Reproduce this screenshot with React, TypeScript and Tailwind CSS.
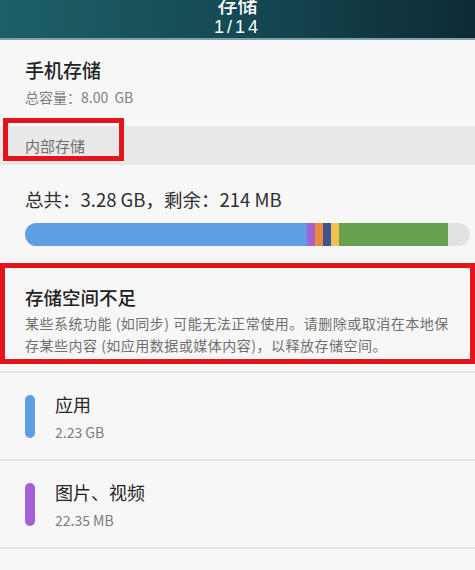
import React from "react";

const font = { fontFamily: '"Noto Sans CJK SC", "Noto Sans", "Liberation Sans", sans-serif' };

function Row({ color, title, size }: { color: string; title: string; size: string }) {
  return (
    <div className="flex h-[88px] border-b-2 border-[#e6e6e6] pl-[25px] pt-[19px]">
      <div className={`mt-[3px] h-[43px] w-[10px] rounded-full ${color}`} />
      <div className="ml-[20px] flex flex-col">
        <div className="text-[18px] leading-[24px] text-[#262626]">{title}</div>
        <div className="mt-[7px] text-[14px] leading-[18px] text-[#7b7b7b]">{size}</div>
      </div>
    </div>
  );
}

export default function App() {
  return (
    <div className="relative h-[570px] w-[475px] overflow-hidden bg-[#f7f7f7]" style={font}>
      {/* Header */}
      <div className="h-[40px] overflow-hidden border-b-[2px] border-[#7fa2a6] bg-gradient-to-r from-[#1d5f66] via-[#154a54] to-[#0d2a36]">
        <div className="-mt-[8px] flex flex-col items-center text-white">
          <div className="text-[20px] leading-[26px] font-medium">存储</div>
          <div className="-mt-[1px] text-[18px] leading-[20px] font-light tracking-[3px]" style={{ fontFamily: '"Liberation Sans", sans-serif' }}>
            1/14
          </div>
        </div>
      </div>

      {/* Phone storage */}
      <div className="px-[25px] pt-[16px] pb-[4px]">
        <div className="text-[19px] leading-[28px] font-medium text-[#222]">手机存储</div>
        <div className="mt-[3px] whitespace-pre text-[14px] leading-[20px] text-[#808080]">总容量：8.00  GB</div>
      </div>

      {/* Section header */}
      <div className="mt-[15px] h-[39px] bg-[#e9e9e9] pl-[25px] pt-[10px] text-[15px] leading-[20px] text-[#6e6e6e]">内部存储</div>

      {/* Totals */}
      <div className="px-[25px] pt-[21px]">
        <div className="text-[18.5px] leading-[26px] text-[#2e2e2e]">总共：3.28 GB，剩余：214 MB</div>
        <div className="mt-[11px] flex h-[23px] w-[445px] overflow-hidden rounded-full bg-[#e2e2e2]">
          <div className="w-[282px] bg-[#5e9fe4]" />
          <div className="w-[8px] bg-[#a163d4]" />
          <div className="w-[8px] bg-[#ec8a40]" />
          <div className="w-[8px] bg-[#3d5593]" />
          <div className="w-[8px] bg-[#f1c04f]" />
          <div className="w-[109px] bg-[#66a24d]" />
        </div>
      </div>

      {/* Warning */}
      <div className="mt-[17px] border-b-2 border-[#e6e6e6] px-[25px] pt-[21px] pb-[15px]">
        <div className="text-[18.5px] leading-[26px] font-medium text-[#222]">存储空间不足</div>
        <div className="mt-[2px] text-[14px] leading-[22px] tracking-[0.5px] text-[#6f6f6f]">
          某些系统功能 (如同步) 可能无法正常使用。请删除或取消在本地保
          <br />
          存某些内容 (如应用数据或媒体内容)，以释放存储空间。
        </div>
      </div>

      <Row color="bg-[#5e9fe4]" title="应用" size="2.23 GB" />
      <Row color="bg-[#a35fd6]" title="图片、视频" size="22.35 MB" />
      <Row color="bg-[#e98aa0]" title="音频" size="1.02 MB" />

      {/* Red annotation boxes */}
      <div className="absolute left-[3px] top-[118px] h-[43px] w-[121px] border-[5px] border-[#e3141b]" />
      <div className="absolute left-0 top-[263px] h-[101px] w-[475px] border-[5px] border-[#e3141b]" />
    </div>
  );
}
